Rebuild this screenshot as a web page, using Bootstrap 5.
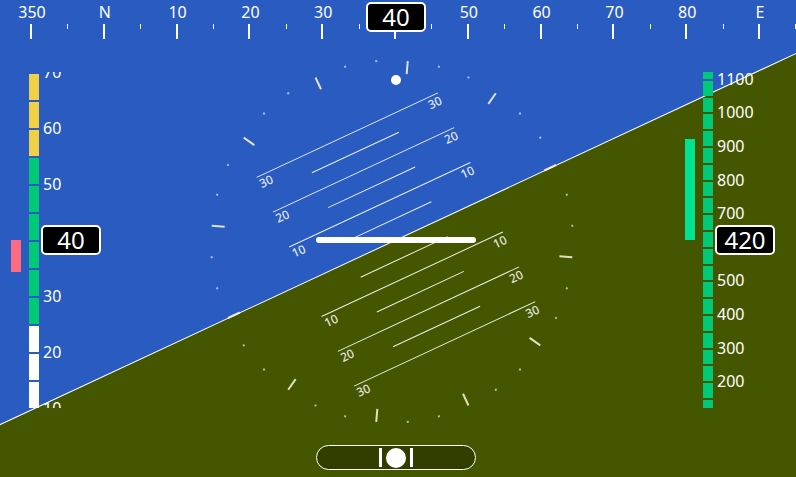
<!DOCTYPE html>
<html lang="en">
<head>
<meta charset="utf-8">
<meta name="viewport" content="width=device-width, initial-scale=1">
<title>Primary flight display</title>
<link href="https://cdn.jsdelivr.net/npm/bootstrap@5.3.0/dist/css/bootstrap.min.css" rel="stylesheet">
<style>
  :root { --sky: #295bc0; --ground: #455600; --ok: #00c978; --caution: #f0d044; --climb: #00e392; --sink: #ff6a80; }
  body { font-family: "Noto Sans", sans-serif; font-size: 16px; line-height: 24px; background: var(--sky); color: #fff; }
  svg { overflow: visible; }
  svg text { fill: currentColor; }
  .stage-layer { padding: 3px 4px 0 0; }
  .attitude { width: 400px; height: 400px; }
  .attitude .earth { fill: var(--ground); }
  .pitch text { font-size: 12px; font-weight: 500; opacity: .85; }
  .heading { padding-right: 4px; }
  .heading svg { width: 730px; height: 40px; }
  .tapes { padding: 3px 21px 0 11px; }
  .tape { height: 336px; gap: 8px; }
  .strip { width: 10px; }
  .tape-scale { gap: 4px; }
  .seg { border-top: 2px solid transparent; background-clip: padding-box; }
  .speed .seg { height: 28px; }
  .speed .tick-label { height: 56px; }
  .speed .tick-labels { margin-top: -28px; }
  .altitude .seg { height: 5%; }
  .altitude .tick-label { height: 10%; }
  .altitude .strip-run { margin-top: -10px; height: 100%; }
  .tick-labels { width: 58px; }
  .seg-caution { background-color: var(--caution); }
  .seg-ok { background-color: var(--ok); }
  .seg-low { background-color: #fff; }
  .sink { background: var(--sink); }
  .climb { background: var(--climb); }
  .readout { width: 60px; height: 30px; border: 2px solid #fff; border-radius: 5px; background: #000; font-size: 24px; line-height: 26px; }
  .tape .readout { left: 30px; }
  .heading .readout { margin-top: 2px; }
  .slip-row { padding: 0 4px 7px 0; }
  .slip { width: 160px; height: 25px; gap: 4px; border: 1px solid #fff; border-radius: 13px; background: rgba(0, 0, 0, .27); }
  .slip-mark { width: 3px; height: 19px; }
  .slip-ball { width: 20px; height: 20px; }
</style>
</head>
<body>
<main class="position-relative vh-100 overflow-hidden">

  <div class="stage-layer h-100 d-flex align-items-center justify-content-center">
    <svg class="attitude flex-shrink-0" viewBox="-200 -200 400 400" role="img" aria-label="Attitude indicator">
      <g transform="rotate(-25)">
        <rect class="earth" x="-3000" y="0" width="6000" height="3000"/>
        <path d="M-3000 0H3000" stroke="#fff" stroke-width="1"/>
      </g>
      <g id="ring" transform="translate(-4 1.5)"></g>
      <g id="pitch" class="pitch" transform="translate(0 -.5) rotate(-25)"></g>
      <circle cx="0" cy="-160" r="5" fill="#fff"/>
      <rect x="-80" y="-3" width="160" height="6" rx="3" fill="#fff"/>
    </svg>
  </div>

  <header class="heading position-absolute top-0 start-0 w-100 d-flex justify-content-center">
    <svg class="flex-shrink-0" viewBox="-365 0 730 40" role="img" aria-label="Heading scale"><g id="compass"></g></svg>
    <output class="readout position-absolute text-center">40</output>
  </header>

  <section class="tapes position-absolute top-0 start-0 w-100 h-100 d-flex align-items-center justify-content-between">
    <div class="tape speed position-relative d-flex">
      <div class="strip"><div class="h-50"></div><div class="sink" id="sink"></div></div>
      <div class="tape-scale d-flex h-100 overflow-hidden">
        <div class="strip" id="speedStrip"></div>
        <div class="tick-labels" id="speedLabels"></div>
      </div>
      <output class="readout position-absolute top-50 translate-middle-y text-center">40</output>
    </div>
    <div class="tape altitude position-relative d-flex">
      <div class="strip"><div class="h-50 d-flex flex-column justify-content-end"><div class="climb" id="climb"></div></div></div>
      <div class="tape-scale d-flex h-100 overflow-hidden">
        <div class="strip strip-run" id="altStrip"></div>
        <div class="tick-labels strip-run" id="altLabels"></div>
      </div>
      <output class="readout position-absolute top-50 translate-middle-y text-center">420</output>
    </div>
  </section>

  <footer class="slip-row position-absolute bottom-0 start-0 w-100 d-flex justify-content-center">
    <div class="slip d-flex align-items-center justify-content-center">
      <div class="slip-mark bg-white"></div>
      <div class="slip-ball bg-white rounded-circle"></div>
      <div class="slip-mark bg-white"></div>
    </div>
  </footer>
</main>

<script src="https://cdn.jsdelivr.net/npm/bootstrap@5.3.0/dist/js/bootstrap.bundle.min.js"></script>
<script>
  const byId = id => document.getElementById(id);

  // Bank ring: a stroke every 30 degrees, a dot every 10
  let ring = '';
  for (let a = 0; a < 360; a += 10) {
    ring += a % 30 === 0
      ? `<path d="M0 -181V-168" stroke="#fff8dc" stroke-width="2" opacity=".85" transform="rotate(${a - 25})"/>`
      : `<path d="M0 -182V-180" stroke="#fff" stroke-width="2" opacity=".6" transform="rotate(${a - 25})"/>`;
  }
  byId('ring').innerHTML = ring;

  // Pitch ladder, 10 degrees = 38.4 units
  let ladder = '';
  for (let p = -30; p <= 30; p += 5) {
    if (p === 0) continue;
    const y = -p * 3.84, major = p % 10 === 0, half = major ? 100 : 48;
    ladder += `<path d="M${-half} ${y}H${half}" stroke="#fff" stroke-width="1" opacity=".9"/>`;
    if (major) ladder += `<text x="-100" y="${y + 12}">${Math.abs(p)}</text><text x="100" y="${y + 12}" text-anchor="end">${Math.abs(p)}</text>`;
  }
  byId('pitch').innerHTML = ladder;

  // Heading scale; the value behind the readout stays blank
  const names = ['350', 'N', '10', '20', '30', '', '50', '60', '70', '80', 'E'];
  let compass = '';
  names.forEach((name, i) => {
    const x = (i - 5) * 72.8;
    compass += (name && `<text x="${x}" y="18" text-anchor="middle">${name}</text>`) +
      `<rect x="${Math.round(x) - 2}" y="24" width="2" height="15" fill="#fff"/>` +
      `<rect x="${Math.round(x + 35.4)}" y="24" width="1" height="5" fill="#fff"/>`;
  });
  byId('compass').innerHTML = compass;

  // Tapes
  const segs = (n, kind) => `<div class="seg ${kind} flex-shrink-0"></div>`.repeat(n);
  const labels = list => list.map(v => `<div class="tick-label d-flex align-items-center">${v}</div>`).join('');
  byId('speedStrip').innerHTML = segs(3, 'seg-caution') + segs(6, 'seg-ok') + segs(3, 'seg-low');
  byId('speedLabels').innerHTML = labels([70, 60, 50, '', 30, 20, 10]);
  byId('altStrip').innerHTML = segs(21, 'seg-ok');
  byId('altLabels').innerHTML = labels([1100, 1000, 900, 800, 700, '', 500, 400, 300, 200]);
  byId('sink').style.height = '32px';
  byId('climb').style.height = '101px';
</script>
</body>
</html>
